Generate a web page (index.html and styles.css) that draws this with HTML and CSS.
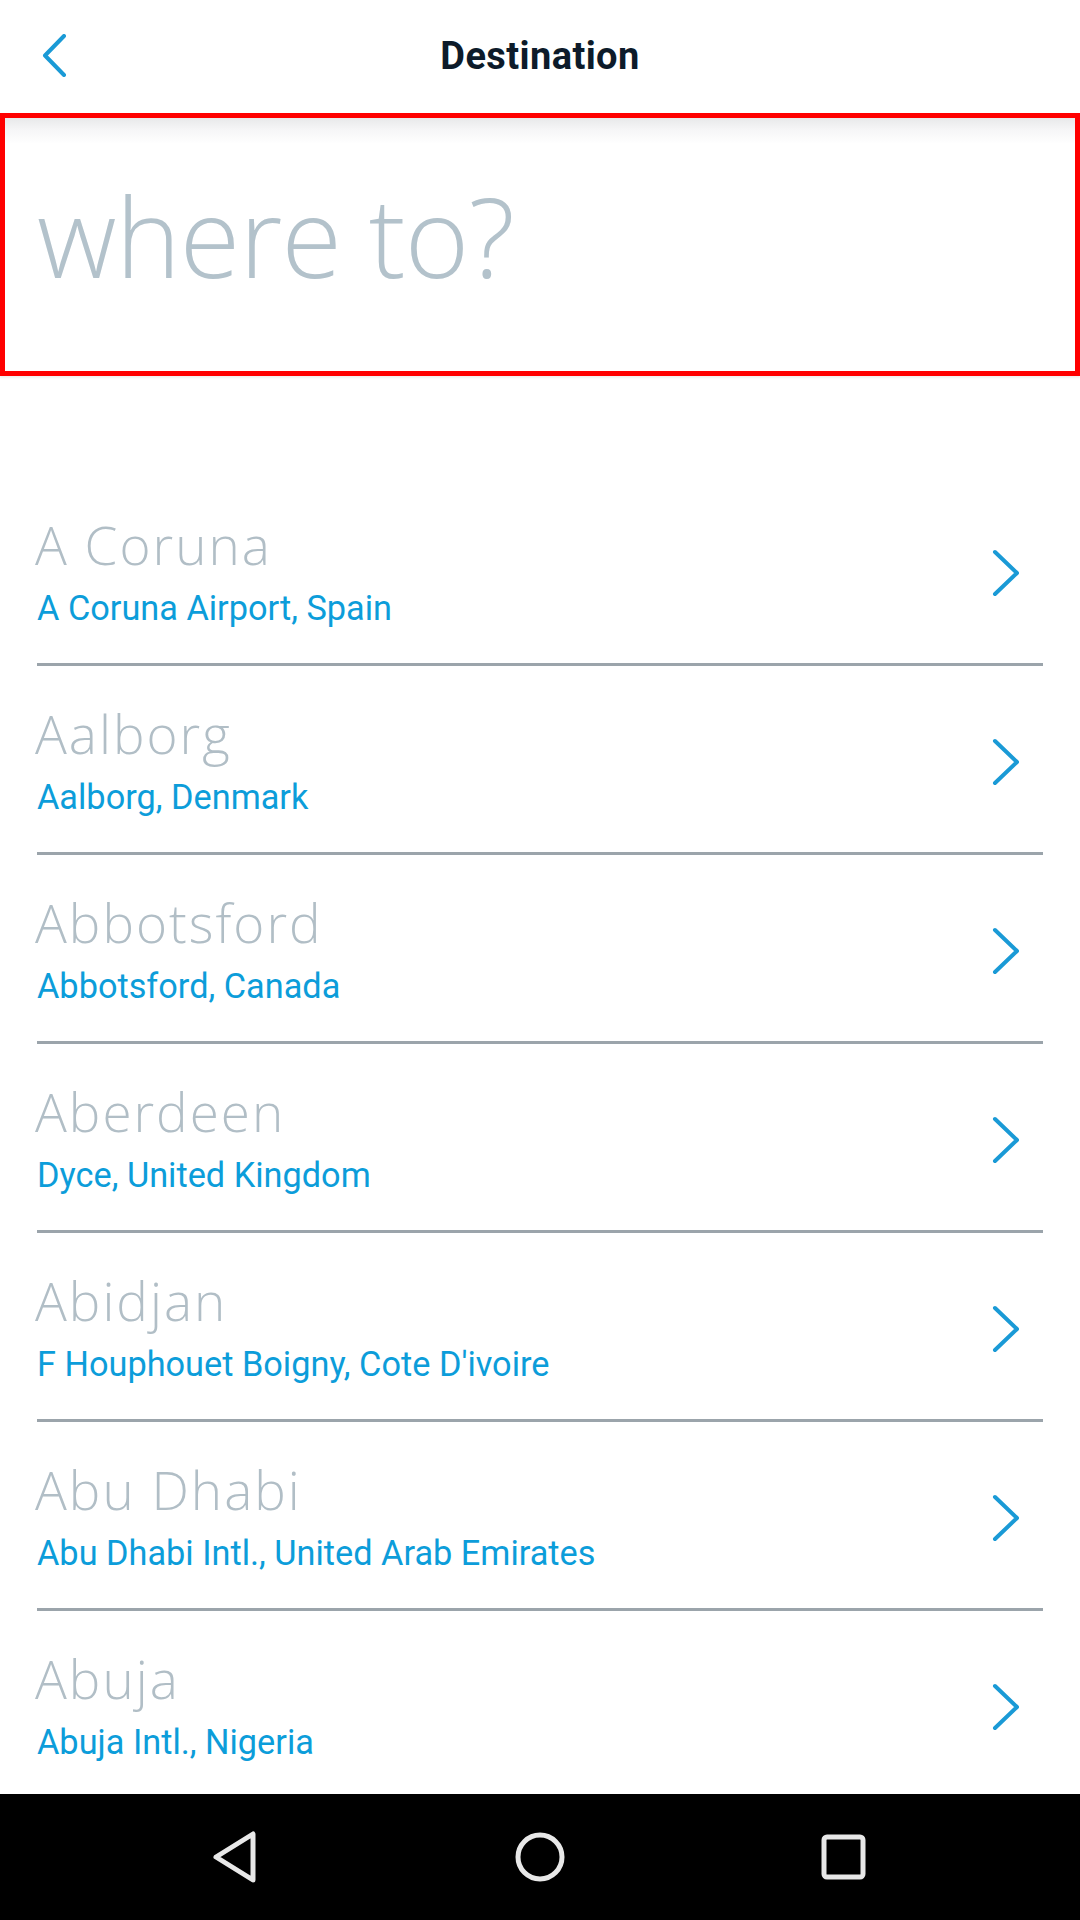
FILE: index.html
```html
<!DOCTYPE html>
<html lang="en">
<head>
<meta charset="utf-8">
<title>Destination</title>
<link rel="stylesheet" href="styles.css">
</head>
<body>
<div class="screen">
  <header class="topbar">
    <div class="topbar-side">
      <svg class="back" width="26" height="43" viewBox="0 0 26 43" aria-hidden="true">
        <polyline points="22,2 3,21.5 22,41" fill="none" stroke="#1a9ad6" stroke-width="4" stroke-linecap="round" stroke-linejoin="round"/>
      </svg>
    </div>
    <h1 class="title">Destination</h1>
    <div class="topbar-side"></div>
  </header>

  <section class="search">
    <div class="search-placeholder">where to?</div>
  </section>

  <ul class="list">
    <li class="row">
      <div class="row-text">
        <div class="city">A Coruna</div>
        <div class="airport">A Coruna Airport, Spain</div>
      </div>
      <svg class="chev" width="30" height="48" viewBox="0 0 30 48" aria-hidden="true"><polyline points="4,3 26,24 4,45" fill="none" stroke="#1a9ad6" stroke-width="4" stroke-linecap="round" stroke-linejoin="round"/></svg>
    </li>
    <li class="row">
      <div class="row-text">
        <div class="city">Aalborg</div>
        <div class="airport">Aalborg, Denmark</div>
      </div>
      <svg class="chev" width="30" height="48" viewBox="0 0 30 48" aria-hidden="true"><polyline points="4,3 26,24 4,45" fill="none" stroke="#1a9ad6" stroke-width="4" stroke-linecap="round" stroke-linejoin="round"/></svg>
    </li>
    <li class="row">
      <div class="row-text">
        <div class="city">Abbotsford</div>
        <div class="airport">Abbotsford, Canada</div>
      </div>
      <svg class="chev" width="30" height="48" viewBox="0 0 30 48" aria-hidden="true"><polyline points="4,3 26,24 4,45" fill="none" stroke="#1a9ad6" stroke-width="4" stroke-linecap="round" stroke-linejoin="round"/></svg>
    </li>
    <li class="row">
      <div class="row-text">
        <div class="city">Aberdeen</div>
        <div class="airport">Dyce, United Kingdom</div>
      </div>
      <svg class="chev" width="30" height="48" viewBox="0 0 30 48" aria-hidden="true"><polyline points="4,3 26,24 4,45" fill="none" stroke="#1a9ad6" stroke-width="4" stroke-linecap="round" stroke-linejoin="round"/></svg>
    </li>
    <li class="row">
      <div class="row-text">
        <div class="city">Abidjan</div>
        <div class="airport">F Houphouet Boigny, Cote D'ivoire</div>
      </div>
      <svg class="chev" width="30" height="48" viewBox="0 0 30 48" aria-hidden="true"><polyline points="4,3 26,24 4,45" fill="none" stroke="#1a9ad6" stroke-width="4" stroke-linecap="round" stroke-linejoin="round"/></svg>
    </li>
    <li class="row">
      <div class="row-text">
        <div class="city">Abu Dhabi</div>
        <div class="airport">Abu Dhabi Intl., United Arab Emirates</div>
      </div>
      <svg class="chev" width="30" height="48" viewBox="0 0 30 48" aria-hidden="true"><polyline points="4,3 26,24 4,45" fill="none" stroke="#1a9ad6" stroke-width="4" stroke-linecap="round" stroke-linejoin="round"/></svg>
    </li>
    <li class="row">
      <div class="row-text">
        <div class="city">Abuja</div>
        <div class="airport">Abuja Intl., Nigeria</div>
      </div>
      <svg class="chev" width="30" height="48" viewBox="0 0 30 48" aria-hidden="true"><polyline points="4,3 26,24 4,45" fill="none" stroke="#1a9ad6" stroke-width="4" stroke-linecap="round" stroke-linejoin="round"/></svg>
    </li>
  </ul>

  <nav class="navbar">
    <svg class="nav-icon" width="48" height="54" viewBox="0 0 48 54" aria-hidden="true">
      <path d="M41 4 L41 50 L4 27 Z" fill="none" stroke="#e8e8e8" stroke-width="5" stroke-linejoin="round"/>
    </svg>
    <svg class="nav-icon" width="54" height="54" viewBox="0 0 54 54" aria-hidden="true">
      <circle cx="27" cy="27" r="22" fill="none" stroke="#e8e8e8" stroke-width="5"/>
    </svg>
    <svg class="nav-icon" width="48" height="48" viewBox="0 0 48 48" aria-hidden="true">
      <rect x="4" y="4" width="39" height="40" rx="3" fill="none" stroke="#e8e8e8" stroke-width="5"/>
    </svg>
  </nav>
</div>
</body>
</html>
```

FILE: styles.css
```css
* {
  box-sizing: border-box;
}

html, body {
  margin: 0;
  padding: 0;
  background: #ffffff;
}

.screen {
  width: 1080px;
  height: 1920px;
  display: flex;
  flex-direction: column;
  overflow: hidden;
  background: #ffffff;
}

.topbar {
  height: 113px;
  flex: 0 0 113px;
  display: grid;
  grid-template-columns: 1fr auto 1fr;
  align-items: center;
  background: #ffffff;
}

.topbar-side {
  display: flex;
  align-items: center;
  padding-left: 42px;
}

.back {
  display: block;
  margin-top: -2px;
}

.title {
  margin: 0;
  font-family: Roboto, "Liberation Sans", sans-serif;
  font-weight: 700;
  font-size: 38px;
  line-height: 44px;
  color: #0d1b2a;
  letter-spacing: 0.4px;
  margin-top: -2px;
}

.search {
  height: 263px;
  flex: 0 0 263px;
  border: 5px solid #ff0000;
  background: linear-gradient(to bottom, #e8e9ea 0px, #f6f6f7 12px, #ffffff 26px);
  display: flex;
  align-items: flex-start;
  padding-left: 32px;
  padding-top: 52px;
  box-shadow: 0 2px 2px rgba(0, 0, 0, 0.06);
}

.search-placeholder {
  font-family: "Open Sans", "Liberation Sans", sans-serif;
  font-weight: 300;
  font-size: 110px;
  line-height: 130px;
  color: #b3c2cb;
  letter-spacing: -0.8px;
}

.list {
  list-style: none;
  margin: 101px 0 0 0;
  padding: 0;
  flex: 1 1 auto;
  overflow: hidden;
}

.row {
  margin: 0 37px;
  height: 189px;
  padding-top: 38px;
  padding-bottom: 35px;
  border-bottom: 3px solid #9ba4ab;
  display: flex;
  align-items: center;
  justify-content: space-between;
}

.row-text {
  display: flex;
  flex-direction: column;
  gap: 13px;
}

.city {
  font-family: "Open Sans", "Liberation Sans", sans-serif;
  font-weight: 300;
  font-size: 53px;
  line-height: 60px;
  color: #b1bec6;
  letter-spacing: 2px;
  margin-left: -2px;
}

.airport {
  font-family: Roboto, "Liberation Sans", sans-serif;
  font-weight: 400;
  font-size: 34.3px;
  line-height: 40px;
  color: #0c9dda;
}

.chev {
  display: block;
  margin-right: 22px;
  margin-top: 2px;
}

.navbar {
  height: 126px;
  flex: 0 0 126px;
  background: #000000;
  display: grid;
  grid-template-columns: repeat(3, 304px);
  justify-content: center;
  justify-items: center;
  align-items: center;
}

.nav-icon {
  display: block;
}
```
